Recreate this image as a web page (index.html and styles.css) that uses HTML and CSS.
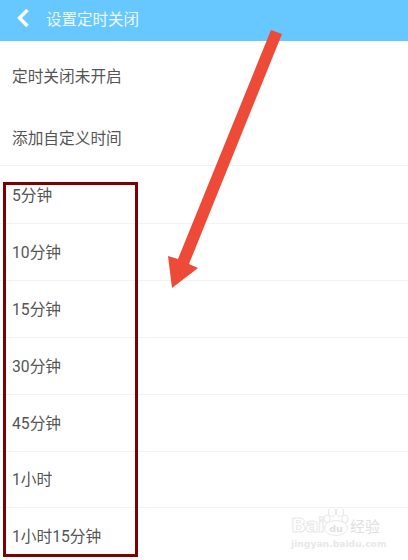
FILE: index.html
```html
<!DOCTYPE html>
<html lang="zh-CN">
<head>
    <meta charset="UTF-8">
    <meta name="viewport" content="width=device-width, initial-scale=1.0">
    <title>设置定时关闭</title>
    <link rel="stylesheet" href="styles.css">
</head>
<body>
    <div class="page">
        <!-- Top bar -->
        <div class="header">
            <svg class="back" width="14" height="20" viewBox="0 0 14 20">
                <path d="M11.5 2 L3.5 10 L11.5 18" fill="none" stroke="#fff" stroke-width="3.4"/>
            </svg>
            <span class="title">设置定时关闭</span>
        </div>

        <!-- Top options -->
        <div class="status">定时关闭未开启</div>
        <div class="custom">添加自定义时间</div>

        <!-- Time list -->
        <div class="row first">5分钟</div>
        <div class="row">10分钟</div>
        <div class="row">15分钟</div>
        <div class="row">30分钟</div>
        <div class="row">45分钟</div>
        <div class="row short">1小时</div>
        <div class="row last">1小时15分钟</div>

        <!-- Annotations on top of the screenshot -->
        <div class="mark-box"></div>
        <svg class="arrow" width="408" height="560" viewBox="0 0 408 560">
            <polygon points="271,30 282,34 189,264 198,268 172,288 168,256 178,259" fill="#ee4a38"/>
        </svg>

        <!-- Watermark -->
        <div class="watermark">
            <div class="wm-top">
                <span class="wm-bai">Bai</span>
                <svg class="wm-paw" width="26" height="29" viewBox="0 0 26 29">
                    <g fill="#fff" stroke="#e8e8e8" stroke-width="1">
                        <ellipse cx="4" cy="12" rx="3" ry="4"/>
                        <ellipse cx="9" cy="5" rx="3.5" ry="4.5"/>
                        <ellipse cx="17" cy="5" rx="3.5" ry="4.5"/>
                        <ellipse cx="22" cy="12" rx="3" ry="4"/>
                        <ellipse cx="13" cy="21" rx="11.5" ry="7.5"/>
                    </g>
                    <text x="13" y="25" text-anchor="middle" class="wm-du">du</text>
                </svg>
                <span class="wm-cn">经验</span>
            </div>
            <div class="wm-url">jingyan.baidu.com</div>
        </div>
    </div>
</body>
</html>
```
FILE: styles.css
```css
/* Page */
body {
    margin: 0;
    background-color: white;
    font-family: Roboto, "Noto Sans CJK SC", sans-serif;
    color: #555;
}
.page {
    position: relative;
    width: 408px;
    height: 560px;
    overflow: hidden;
}

/* Top bar */
.header {
    display: flex;
    align-items: center;
    height: 35px;
    padding-bottom: 6px;
    padding-left: 16px;
    background-color: #66c8ff;
    color: #eef9ff;
}
.back {
    margin-right: 16px;
}
.title {
    font-size: 15.5px;
}

/* Rows */
.status {
    height: 66px;
    line-height: 72px;
    padding-left: 12px;
    font-size: 15.7px;
}
.custom {
    height: 58px;
    line-height: 64px;
    padding-left: 12px;
    font-size: 15.7px;
    border-bottom: 1px solid #f2f2f2;
}
.row {
    height: 56px;
    line-height: 57px;
    padding-left: 12px;
    font-size: 15.7px;
    border-bottom: 1px solid #f2f2f2;
}
.row.first {
    height: 57px;
    line-height: 59px;
}
.row.short {
    height: 55px;
    line-height: 56px;
}
.row.last {
    line-height: 58px;
    border-bottom: none;
}

/* Annotations */
.mark-box {
    position: absolute;
    left: 3px;
    top: 182px;
    width: 129px;
    height: 369px;
    border: 3px solid #7f0000;
}
.arrow {
    position: absolute;
    left: 0;
    top: 0;
}

/* Watermark */
.watermark {
    position: absolute;
    left: 291px;
    top: 506px;
    width: 100px;
    color: #e8e8e8;
}
.wm-top {
    display: flex;
    align-items: flex-end;
    height: 30px;
}
.wm-bai {
    width: 32px;
    font-family: "DejaVu Sans", sans-serif;
    font-size: 20px;
    font-weight: bold;
    line-height: 20px;
    letter-spacing: -1px;
    margin-bottom: 1px;
    color: #fff;
    -webkit-text-stroke: 1px #e8e8e8;
}
.wm-paw {
    flex-shrink: 0;
}
.wm-du {
    font-family: "DejaVu Sans", sans-serif;
    font-size: 9.5px;
    font-weight: bold;
    fill: #dedede;
}
.wm-cn {
    margin-left: 1px;
    font-size: 15px;
    line-height: 18px;
    white-space: nowrap;
    color: #e0e0e0;
}
.wm-url {
    margin-top: 2px;
    font-family: "DejaVu Sans", sans-serif;
    font-size: 9.2px;
    font-weight: bold;
    white-space: nowrap;
}
```
